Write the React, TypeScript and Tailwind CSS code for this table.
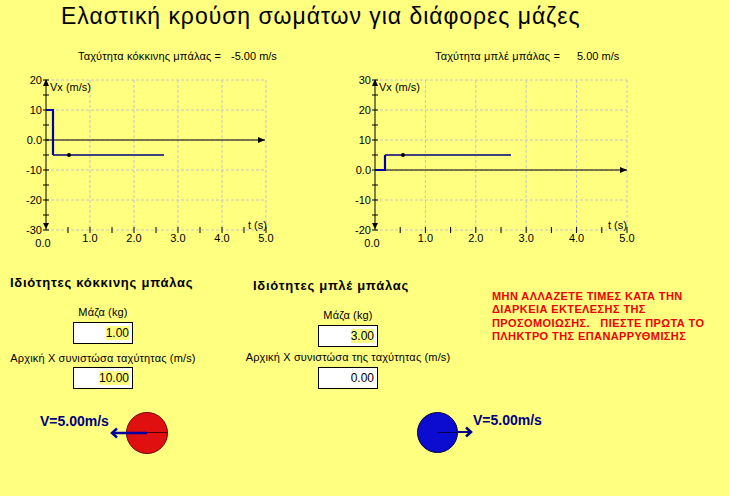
type GraphProps = {
  x0: number;
  pps: number;
  labels: string[];
  zeroY: number;
  thick: string;
  thin: string;
  dot: [number, number];
  tLabelX: number;
  arrowX: number;
};

const TOP = 10;
const BOTTOM = 160;

function Graph({ x0, pps, labels, zeroY, thick, thin, dot, tLabelX, arrowX }: GraphProps) {
  const right = x0 + pps * 5;
  const rows = [0, 1, 2, 3, 4, 5].map((i) => TOP + i * 30);
  const cols = [1, 2, 3, 4, 5].map((i) => x0 + i * pps);
  const yTicks = Array.from({ length: 11 }, (_, i) => TOP + i * 15);
  const xTicks = Array.from({ length: 10 }, (_, i) => x0 + (i + 1) * (pps / 2));

  return (
    <svg width={right + 12} height={180} className="text-[11px] block">
      {/* grid */}
      {rows.map((y) => (
        <line key={"r" + y} x1={x0} x2={right} y1={y} y2={y} stroke="#c4c4c4" strokeDasharray="3 2" />
      ))}
      {cols.map((x) => (
        <line key={"c" + x} x1={x} x2={x} y1={TOP} y2={BOTTOM} stroke="#c4c4c4" strokeDasharray="3 2" />
      ))}

      {/* y axis */}
      <line x1={x0} x2={x0} y1={TOP} y2={BOTTOM} stroke="#000" />
      <polygon points={`${x0},${TOP - 1} ${x0 - 3},${TOP + 6} ${x0 + 3},${TOP + 6}`} fill="#000" />
      <polygon points={`${x0},${BOTTOM - 1} ${x0 - 3},${BOTTOM - 7} ${x0 + 3},${BOTTOM - 7}`} fill="#000" />
      {yTicks.map((y) => (
        <line key={"yt" + y} x1={x0 - 3} x2={x0 + 3} y1={y} y2={y} stroke="#000" />
      ))}
      {xTicks.map((x) => (
        <line key={"xt" + x} x1={x} x2={x} y1={BOTTOM - 3} y2={BOTTOM + 3} stroke="#000" />
      ))}

      {/* x axis */}
      <line x1={x0} x2={arrowX} y1={zeroY} y2={zeroY} stroke="#000" />
      <polygon points={`${arrowX},${zeroY} ${arrowX - 7},${zeroY - 3} ${arrowX - 7},${zeroY + 3}`} fill="#000" />

      {labels.map((l, i) => (
        <text key={l} x={x0 - 4} y={TOP + i * 30 + 4} textAnchor="end" fill="#000">
          {l}
        </text>
      ))}
      <text x={x0 - 3} y={177} textAnchor="middle" fill="#000">
        0.0
      </text>
      {cols.map((x, i) => (
        <text key={"xl" + x} x={x} y={172} textAnchor="middle" fill="#000">
          {`${i + 1}.0`}
        </text>
      ))}
      <text x={x0 + 4} y={21} fill="#000">
        Vx (m/s)
      </text>
      <text x={tLabelX} y={159} fill="#000">
        t (s)
      </text>

      {/* data */}
      <polyline points={thick} fill="none" stroke="#0000a8" strokeWidth={2.2} />
      <polyline points={thin} fill="none" stroke="#000080" strokeWidth={1.3} />
      <circle cx={dot[0]} cy={dot[1]} r={2} fill="#000" />
    </svg>
  );
}

function Field({ value, mark }: { value: string; mark?: boolean }) {
  return (
    <div className="w-[60px] h-[22px] bg-white border border-black flex items-center justify-end pr-[3px] text-[12px] leading-[14px]">
      <span className={mark ? "bg-[#ffff80]" : ""}>{value}</span>
    </div>
  );
}

export default function App() {
  return (
    <div className="w-[729px] h-[496px] bg-[#ffff80] text-black font-['Liberation_Sans',Arial,sans-serif] overflow-hidden flex flex-col">
      <h1 className="h-[49px] pt-[1px] pl-[61px] text-[23px] leading-[30px] tracking-[0.95px]">
        Ελαστική κρούση σωμάτων για διάφορες μάζες
      </h1>

      {/* graphs */}
      <div className="flex h-[201px]">
        <div className="w-[330px] flex flex-col">
          <div className="h-[21px] pl-[78px] flex text-[11px] leading-[14px]">
            <span className="w-[153px] tracking-[0.15px]">Ταχύτητα κόκκινης μπάλας =</span>
            <span>-5.00 m/s</span>
          </div>
          <Graph
            x0={46}
            pps={44}
            labels={["20", "10", "0.0", "-10", "-20", "-30"]}
            zeroY={70}
            thick="46,40 53,40 53,85"
            thin="53,85 164,85"
            dot={[69, 85]}
            tLabelX={248}
            arrowX={265}
          />
        </div>
        <div className="flex-1 flex flex-col">
          <div className="h-[21px] pl-[105px] flex text-[11px] leading-[14px]">
            <span className="w-[142px] tracking-[0.15px]">Ταχύτητα μπλέ μπάλας =</span>
            <span>5.00 m/s</span>
          </div>
          <Graph
            x0={45}
            pps={50.4}
            labels={["30", "20", "10", "0.0", "-10", "-20"]}
            zeroY={100}
            thick="45,100 55,100 55,85"
            thin="55,85 181,85"
            dot={[73, 85]}
            tLabelX={278}
            arrowX={297}
          />
        </div>
      </div>

      {/* properties */}
      <div className="flex h-[146px]">
        <div className="w-[206px] flex flex-col items-center">
          <h2 className="self-start pl-[10px] mt-[25px] text-[13px] leading-[16px] font-bold tracking-[0.75px]">
            Ιδιότητες κόκκινης μπάλας
          </h2>
          <p className="mt-[14px] text-[11px] leading-[14px] tracking-[0.15px]">Μάζα (kg)</p>
          <div className="mt-[3px]">
            <Field value="1.00" mark />
          </div>
          <p className="mt-[7px] text-[11px] leading-[14px] tracking-[0.15px]">Αρχική X συνιστώσα ταχύτητας (m/s)</p>
          <div className="mt-[2px]">
            <Field value="10.00" mark />
          </div>
        </div>

        <div className="ml-[34px] w-[216px] flex flex-col items-center">
          <h2 className="self-start pl-[13px] mt-[28px] text-[13px] leading-[16px] font-bold tracking-[0.75px]">
            Ιδιότητες μπλέ μπάλας
          </h2>
          <p className="mt-[14px] text-[11px] leading-[14px] tracking-[0.15px]">Μάζα (kg)</p>
          <div className="mt-[3px]">
            <Field value="3.00" mark />
          </div>
          <p className="mt-[3px] text-[11px] leading-[14px] tracking-[0.15px]">Αρχική X συνιστώσα της ταχύτητας (m/s)</p>
          <div className="mt-[3px]">
            <Field value="0.00" />
          </div>
        </div>

        <div className="ml-[36px] mt-[40px] text-[11px] leading-[13.4px] font-bold tracking-[0.4px] text-[#f00000] whitespace-pre">
          {"ΜΗΝ ΑΛΛΑΖΕΤΕ ΤΙΜΕΣ ΚΑΤΑ ΤΗΝ\nΔΙΑΡΚΕΙΑ ΕΚΤΕΛΕΣΗΣ ΤΗΣ\nΠΡΟΣΟΜΟΙΩΣΗΣ.   ΠΙΕΣΤΕ ΠΡΩΤΑ ΤΟ\nΠΛΗΚΤΡΟ ΤΗΣ ΕΠΑΝΑΡΡΥΘΜΙΣΗΣ"}
        </div>
      </div>

      {/* simulation strip */}
      <div className="relative flex-1">
        <span className="absolute left-[40px] top-[17px] text-[14px] leading-[16px] font-bold text-[#000080]">
          V=5.00m/s
        </span>
        <div className="absolute left-[126px] top-[16px] w-[42px] h-[42px] rounded-full bg-[#e01010] border border-[#700000]">
          <div className="absolute left-1/2 top-[19px] w-1/2 h-px bg-[#500000]" />
        </div>
        <div className="absolute left-[110px] top-[31px]">
          <svg width="40" height="12" viewBox="0 0 40 12" className="block">
            <line x1="2" x2="37" y1="6" y2="6" stroke="#0000a0" strokeWidth="2.5" />
            <polyline points="7,1.5 2,6 7,10.5" fill="none" stroke="#0000a0" strokeWidth="2.5" />
          </svg>
        </div>

        <div className="absolute left-[417px] top-[16px] w-[41px] h-[41px] rounded-full bg-[#0c0cd0] border border-[#000040]">
          <div className="absolute left-1/2 top-[19px] w-1/2 h-px bg-[#000050]" />
        </div>
        <div className="absolute left-[457px] top-[30px]">
          <svg width="16" height="12" viewBox="0 0 16 12" className="block">
            <line x1="0" x2="14" y1="6" y2="6" stroke="#000080" strokeWidth="2" />
            <polyline points="9,1.5 14,6 9,10.5" fill="none" stroke="#000080" strokeWidth="2.5" />
          </svg>
        </div>
        <span className="absolute left-[473px] top-[16px] text-[14px] leading-[16px] font-bold text-[#000080]">
          V=5.00m/s
        </span>
      </div>
    </div>
  );
}
